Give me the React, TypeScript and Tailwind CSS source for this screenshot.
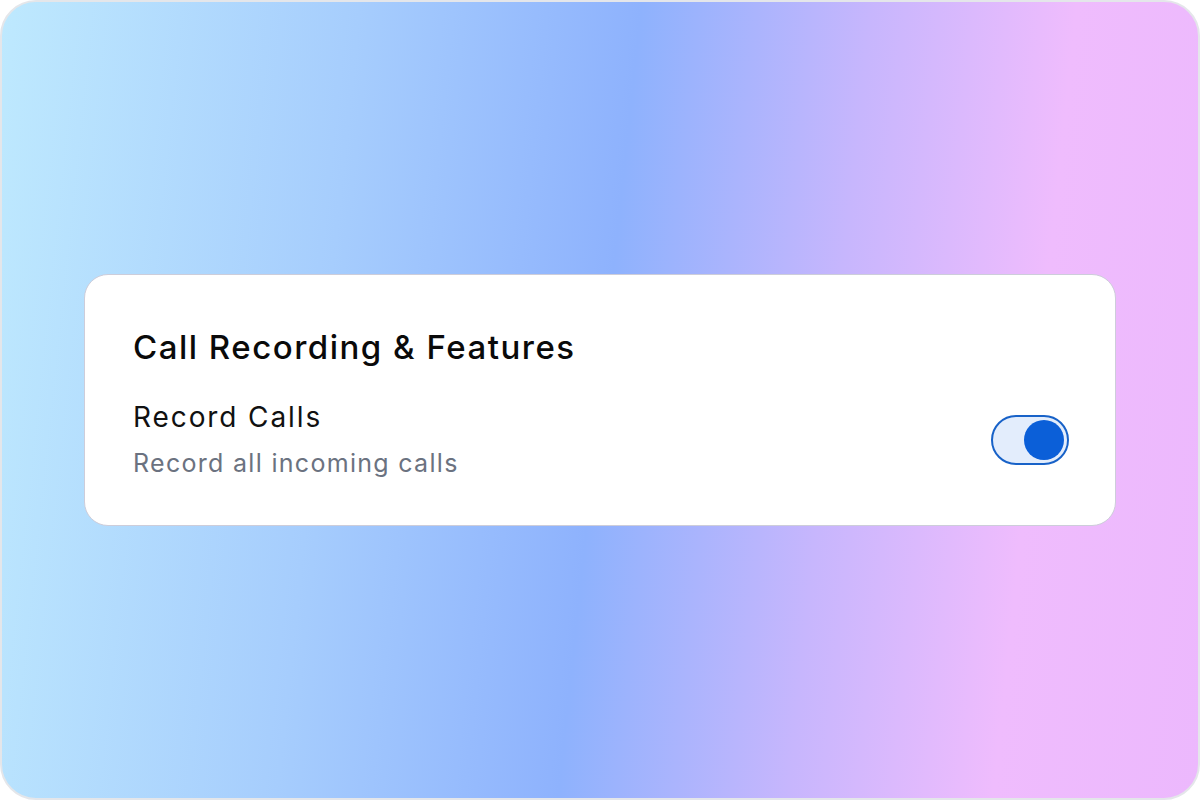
import { useState } from "react";

export default function App() {
    const [on, setOn] = useState(true);

    return (
        <div className="w-[1200px] h-[800px] bg-white" style={{ fontFamily: "Inter, 'Noto Sans', sans-serif" }}>
            <div className="w-full h-full rounded-[36px] border-2 border-[#e4e6ea] bg-[linear-gradient(96deg,#bee9fe_0%,#a6cdfd_28%,#8eb2fd_50%,#c7b6fd_68%,#efbcfd_84%,#ecb8fd_100%)] flex items-center px-[82px]">
                <div className="w-full bg-white rounded-[24px] border border-[#cdcdda] pl-12 pr-[46px] pt-12 pb-[44px]">
                    <h2 className="text-[33px] leading-[48px] font-medium tracking-[1.5px] text-[#0a0a0a]">
                        Call Recording &amp; Features
                    </h2>
                    <div className="mt-[28px] flex items-center justify-between">
                        <div>
                            <div className="text-[28px] leading-[36px] tracking-[1.9px] text-[#111111]">Record Calls</div>
                            <div className="mt-[10px] text-[25px] leading-[36px] tracking-[1.3px] text-[#6b7280]">Record all incoming calls</div>
                        </div>
                        <button
                            onClick={() => setOn(!on)}
                            className="w-[78px] h-[50px] rounded-full border-2 border-[#1862c8] bg-[#e3edfc] flex items-center px-[3px]"
                            aria-label="Record Calls"
                        >
                            <span className={on ? "ml-auto w-[40px] h-[40px] rounded-full bg-[#0b5fd8]" : "w-[40px] h-[40px] rounded-full bg-[#0b5fd8]"}></span>
                        </button>
                    </div>
                </div>
            </div>
        </div>
    );
}
